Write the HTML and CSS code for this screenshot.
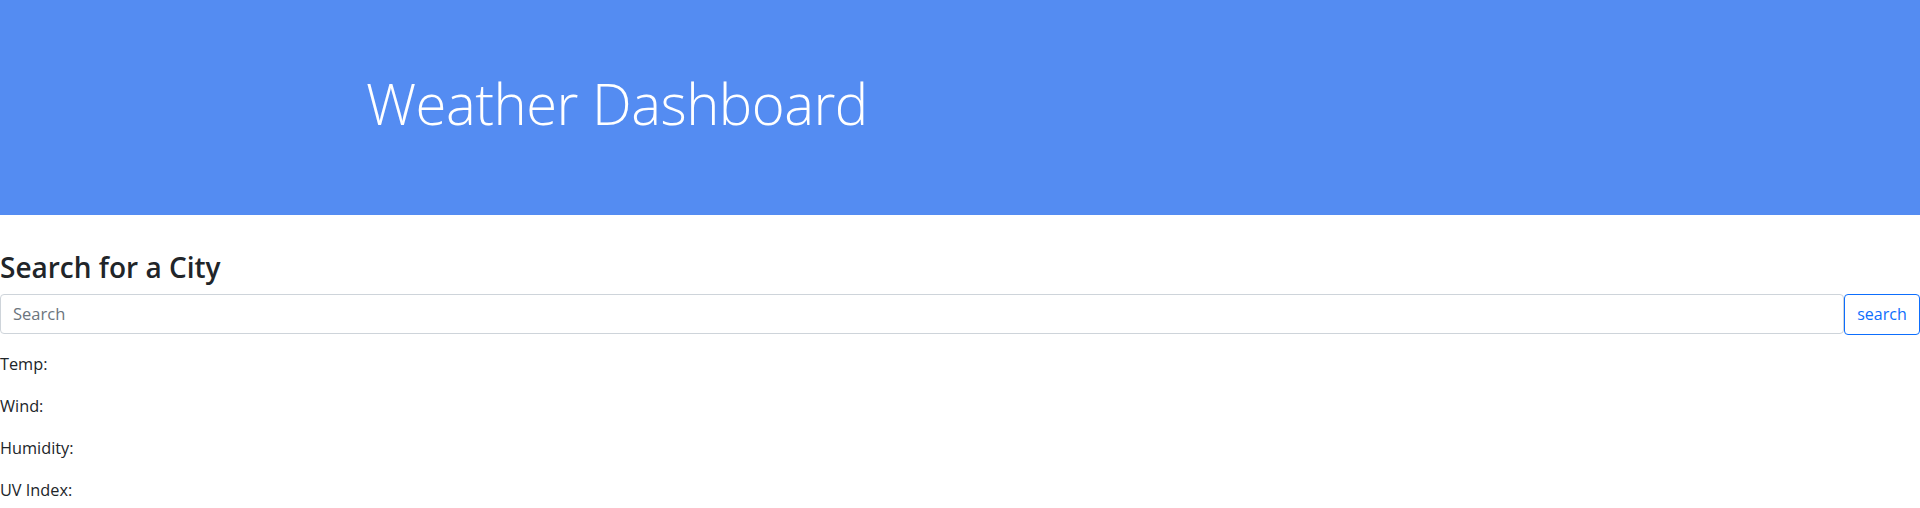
FILE: index.html
```html
<!DOCTYPE html>
<html lang="en">
<head>
<meta charset="utf-8">
<title>Weather Dashboard</title>
<link rel="stylesheet" href="styles.css">
</head>
<body>
  <header class="hero">
    <h1 class="hero-title">Weather Dashboard</h1>
  </header>
  <main class="content">
    <h3 class="search-heading">Search for a City</h3>
    <form class="search-row">
      <input class="search-input" type="text" placeholder="Search">
      <button class="search-btn" type="button">search</button>
    </form>
    <div class="stats">
      <p class="stat">Temp:</p>
      <p class="stat">Wind:</p>
      <p class="stat">Humidity:</p>
      <p class="stat">UV Index:</p>
    </div>
  </main>
</body>
</html>
```
FILE: styles.css
```css
* { box-sizing: border-box; }
html, body { margin: 0; padding: 0; }
body {
  font-family: "Open Sans", "Noto Sans", "Liberation Sans", sans-serif;
  font-size: 16px;
  line-height: 1.5;
  color: #212529;
  background: #fff;
}
.hero {
  background: #548cf2;
  height: 215px;
  padding: 70px 0 0 366px;
}
.hero-title {
  margin: 0;
  font-size: 56.2px;
  font-weight: 300;
  line-height: 1.2;
  color: #fff;
  letter-spacing: -0.5px;
}
.content {
  padding-top: 36px;
}
.search-heading {
  margin: 0 0 9px 0;
  font-size: 28px;
  font-weight: 600;
  line-height: 1.2;
}
.search-row {
  display: flex;
  margin: 0;
}
.search-input {
  flex: 1;
  height: 40px;
  padding: 6px 12px;
  font-family: inherit;
  font-size: 16.5px;
  color: #212529;
  border: 1px solid #ced4da;
  border-radius: 4px;
  outline: none;
}
.search-input::placeholder { color: #6c757d; }
.search-btn {
  height: 41px;
  width: 76px;
  padding: 6px 12px;
  font-family: inherit;
  font-size: 16px;
  color: #0d6efd;
  background: #fff;
  border: 1px solid #0d6efd;
  border-radius: 4px;
}
.stats {
  padding-top: 17px;
}
.stat {
  margin: 0 0 18px 0;
  line-height: 24px;
  font-size: 16.3px;
}
```
